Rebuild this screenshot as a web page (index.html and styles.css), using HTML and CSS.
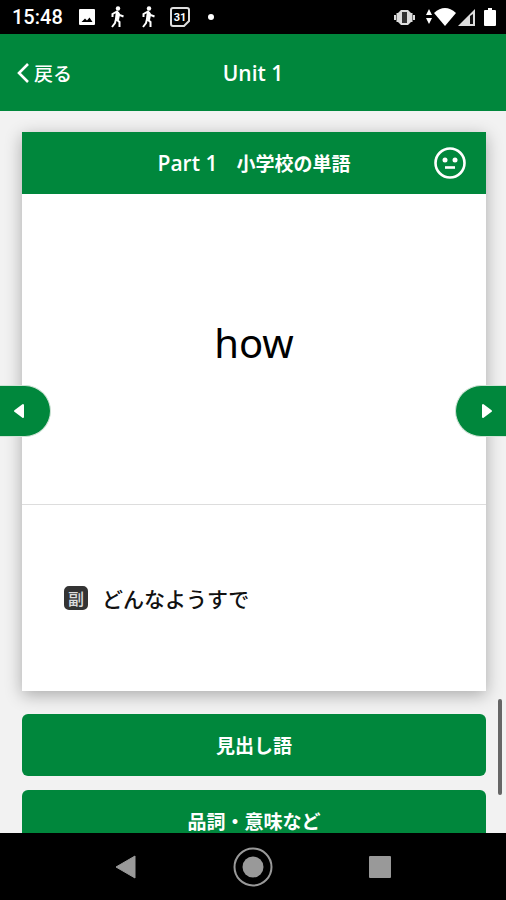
FILE: index.html
```html
<!DOCTYPE html>
<html lang="ja">
<head>
<meta charset="utf-8">
<meta name="viewport" content="width=device-width, initial-scale=1">
<title>Unit 1</title>
<link rel="stylesheet" href="styles.css">
</head>
<body>
<div class="screen">
  <div class="status">
    <span class="time">15:48</span>
    <div class="notices">
      <svg width="20" height="22" viewBox="0 0 20 22"><path fill="#fff" fill-rule="evenodd" d="M3 3h14q1 0 1 1v14q0 1-1 1H3q-1 0-1-1V4q0-1 1-1zM4.500 16h11l-3-4.500-2.500 3-2-2z"/></svg>
      <svg width="20" height="22" viewBox="0 0 20 22"><circle cx="10" cy="2.500" r="2.200" fill="#fff"/><path fill="none" stroke="#fff" stroke-width="2" d="M4.500 11V8L9 5.500 11.500 9l4 1.500M9 6L8 13l3.500 3v5M8 13l-1 4-3 4"/><path fill="#fff" d="M8 5.500l3 .5 1 3-1 5-3.500-.5z"/></svg>
      <svg width="20" height="22" viewBox="0 0 20 22"><circle cx="10" cy="2.500" r="2.200" fill="#fff"/><path fill="none" stroke="#fff" stroke-width="2" d="M4.500 11V8L9 5.500 11.500 9l4 1.500M9 6L8 13l3.500 3v5M8 13l-1 4-3 4"/><path fill="#fff" d="M8 5.500l3 .5 1 3-1 5-3.500-.5z"/></svg>
      <svg width="20" height="22" viewBox="0 0 20 22"><path fill="none" stroke="#ddd" stroke-width="2" d="M3 2h14q2 0 2 2v11l-5 5H3q-2 0-2-2V4q0-2 2-2z"/><text class="date" x="10" y="15" text-anchor="middle">31</text></svg>
      <svg width="20" height="22" viewBox="0 0 20 22"><circle cx="10" cy="11" r="3" fill="#fff"/></svg>
    </div>
    <div class="signals">
      <svg class="apart" width="24" height="22" viewBox="0 0 24 22"><path fill="none" stroke="#ddd" stroke-width="2" d="M2 9v5M21 9v5M4.500 7v9M18.500 7v9"/><path fill="#ddd" d="M8 4h7l3 3v9l-3 3H8l-3-3V7z"/><path fill="#333" d="M9 6h5v11H9z"/></svg>
      <svg width="8" height="22" viewBox="0 0 8 22"><path fill="#fff" d="M4 3l3 6H1zM4 18l3-6H1z"/></svg>
      <svg width="22" height="22" viewBox="0 0 22 22"><path fill="#fff" d="M0 7Q11-3 22 7L11 20z"/></svg>
      <svg class="apart" width="19" height="22" viewBox="0 0 19 22"><path fill="#ddd" d="M18 3v17H1z"/><path fill="#111" d="M13 10l3-2v10h-3z"/></svg>
      <svg width="12" height="22" viewBox="0 0 12 22"><path fill="#fff" d="M4 2h4v2h3q1 0 1 1v14q0 1-1 1H1q-1 0-1-1V5q0-1 1-1h3z"/></svg>
    </div>
  </div>

  <header class="bar">
    <a class="back" href="#">
      <svg width="13" height="20" viewBox="0 0 13 20"><path fill="none" stroke="#fff" stroke-width="2.600" d="M12 1L3 10l9 9"/></svg>戻る</a>
    <h1>Unit 1</h1>
  </header>

  <main class="content">
    <div class="deck">
      <article class="card">
        <div class="card-head">
          <h2><span class="part">Part 1</span>　小学校の単語</h2>
          <button class="face" type="button" aria-label="評価">
            <svg width="32" height="32" viewBox="0 0 32 32"><circle cx="16" cy="16" r="14.500" fill="none" stroke="#fff" stroke-width="2.600"/><circle cx="11" cy="13" r="2.500" fill="#fff"/><circle cx="21" cy="13" r="2.500" fill="#fff"/><path stroke="#fff" stroke-width="2.600" d="M11 20.500h10"/></svg>
          </button>
        </div>
        <p class="word" lang="en">how</p>
        <div class="meaning"><span class="pos">副</span><span>どんなようすで</span></div>
      </article>
      <button class="turn prev" type="button" aria-label="前へ"><svg width="12" height="16" viewBox="0 0 12 16"><path fill="#fff" stroke="#fff" stroke-width="2" stroke-linejoin="round" d="M10 2v12L2 8z"/></svg></button>
      <button class="turn next" type="button" aria-label="次へ"><svg width="12" height="16" viewBox="0 0 12 16"><path fill="#fff" stroke="#fff" stroke-width="2" stroke-linejoin="round" d="M2 2v12l8-6z"/></svg></button>
    </div>
    <div class="actions">
      <button type="button">見出し語</button>
      <button type="button">品詞・意味など</button>
    </div>
    <div class="scroll-thumb"></div>
  </main>

  <nav class="system">
    <button type="button" aria-label="戻る"><svg width="40" height="40" viewBox="0 0 40 40"><path fill="#999" stroke="#999" stroke-width="1" stroke-linejoin="round" d="M29 9v22L10 20z"/></svg></button>
    <button type="button" aria-label="ホーム"><svg width="40" height="40" viewBox="0 0 40 40"><circle cx="20" cy="20" r="18.500" fill="none" stroke="#999" stroke-width="2"/><circle cx="20" cy="20" r="10.500" fill="#999"/></svg></button>
    <button type="button" aria-label="履歴"><svg width="40" height="40" viewBox="0 0 40 40"><rect x="9" y="9" width="22" height="22" rx="1" fill="#999"/></svg></button>
  </nav>
</div>
</body>
</html>
```
FILE: styles.css
```css
* { box-sizing: border-box; }

body {
  margin: 0;
  font-family: "Noto Sans CJK JP", "Noto Sans", sans-serif;
  color: #111;
}

h1, h2, p { margin: 0; }
svg { display: block; flex: none; }

button {
  border: 0;
  padding: 0;
  font: inherit;
  color: inherit;
  background: none;
  cursor: pointer;
}

.screen {
  display: flex;
  flex-direction: column;
  height: 100vh;
  overflow: hidden;
  background: #f2f2f2;
}

.status {
  flex: none;
  display: flex;
  align-items: center;
  height: 34px;
  padding: 0 10px 0 12px;
  background: #000;
  color: #fff;
}

.time {
  font: 500 20px/24px Roboto, sans-serif;
  margin-right: 14px;
}

.notices { display: flex; gap: 11px; }
.signals { display: flex; gap: 1px; margin-left: auto; }
.apart { margin-right: 7px; }
.date { font: 700 11px Roboto, sans-serif; fill: #fff; }

.bar {
  flex: none;
  display: grid;
  grid-template-columns: 1fr auto 1fr;
  align-items: center;
  height: 77px;
  padding: 0 16px;
  background: #00873c;
  color: #fff;
}

.bar h1 {
  font: 600 21px/32px "Open Sans", "Noto Sans CJK JP", sans-serif;
}

.back {
  display: flex;
  align-items: center;
  gap: 5px;
  color: inherit;
  font-size: 19px;
  font-weight: 500;
  line-height: 32px;
  text-decoration: none;
}

.content {
  position: relative;
  flex: 1;
  min-height: 0;
  overflow: hidden;
  padding-top: 21px;
}

.deck {
  position: relative;
  padding: 0 20px 0 22px;
}

.card {
  background: #fff;
  box-shadow: 0 4px 16px rgba(0, 0, 0, 0.3);
}

.card-head {
  display: grid;
  grid-template-columns: 1fr auto 1fr;
  align-items: center;
  height: 62px;
  padding: 0 20px;
  background: #00873c;
  color: #fff;
}

.card-head h2 {
  grid-column: 2;
  font-size: 19px;
  font-weight: 700;
  line-height: 28px;
}

.part {
  font-family: "Open Sans", sans-serif;
  font-size: 21px;
  font-weight: 600;
}

.face { justify-self: end; }

.word {
  padding: 119px 20px 131px;
  border-bottom: 1px solid #ddd;
  color: #000;
  font: 400 40px/60px "Noto Sans", sans-serif;
  text-align: center;
}

.meaning {
  display: flex;
  align-items: center;
  gap: 14px;
  padding: 77px 42px;
  font-size: 21px;
  font-weight: 500;
  line-height: 32px;
}

.pos {
  width: 24px;
  height: 24px;
  border: 4px solid #333;
  border-radius: 5px;
  background: #333;
  color: #ddd;
  font-size: 16px;
  line-height: 16px;
  text-align: center;
}

.turn {
  position: absolute;
  top: calc(50% - 27px);
  width: 51px;
  height: 52px;
  background: #00873c;
  border: 1px solid #cfe3d6;
}

.prev {
  left: 0;
  padding-left: 13px;
  border-left: 0;
  border-radius: 0 26px 26px 0;
}

.next {
  right: 0;
  padding-left: 25px;
  border-right: 0;
  border-radius: 26px 0 0 26px;
}

.actions {
  display: grid;
  gap: 14px;
  padding: 23px 20px 14px 22px;
}

.actions button {
  height: 62px;
  border-radius: 6px;
  background: #00873c;
  color: #fff;
  font-size: 19px;
  font-weight: 700;
  line-height: 28px;
}

.scroll-thumb {
  position: absolute;
  right: 4px;
  bottom: 38px;
  width: 4px;
  height: 96px;
  border-radius: 2px;
  background: #666;
}

.system {
  flex: none;
  display: flex;
  justify-content: center;
  gap: 87px;
  height: 67px;
  background: #000;
}
```
